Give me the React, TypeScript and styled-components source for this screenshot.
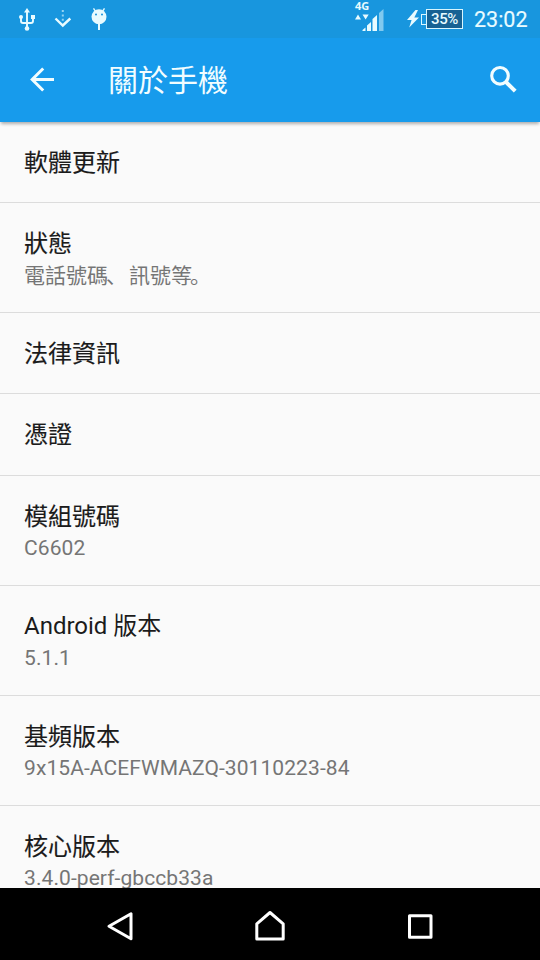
import React from 'react';
import styled, { createGlobalStyle } from 'styled-components';

const GlobalStyle = createGlobalStyle`
  html, body { margin: 0; padding: 0; background: #000; }
  * { box-sizing: border-box; }
`;

const Screen = styled.div`
  width: 540px;
  height: 960px;
  display: flex;
  flex-direction: column;
  overflow: hidden;
  background: #fafafa;
  font-family: Roboto, 'Noto Sans CJK TC', sans-serif;
`;

const StatusBar = styled.header`
  flex: none;
  height: 38px;
  display: flex;
  align-items: flex-start;
  justify-content: space-between;
  background: #1896de;
  color: #e8fbff;
`;

const StatusIcons = styled.div`
  display: flex;
`;

const StatusGroup = styled.div`
  display: flex;
  align-items: flex-start;
  padding-right: 12px;
`;

const Signal = styled.div`
  width: 34px;
  height: 34px;
  margin-right: 17px;
  display: flex;
  flex-direction: column;
`;

const NetworkLabel = styled.span`
  height: 11px;
  font: 700 11px/11px 'Noto Sans', sans-serif;
`;

const Battery = styled.div`
  display: flex;
  align-items: center;
  margin: 9px 11px 0 0;
`;

const BatteryTip = styled.div`
  width: 5px;
  height: 11px;
  border: 1.5px solid #d8f6ff;
  border-right: 0;
`;

const BatteryBody = styled.div`
  width: 37px;
  height: 20px;
  border: 1px solid #d8f6ff;
  background: #176293;
  text-align: center;
  font: 500 15px/18px Roboto, sans-serif;
  letter-spacing: -0.4px;
`;

const Clock = styled.span`
  margin-top: 8px;
  width: 54px;
  font-size: 21.5px;
  line-height: 24px;
  white-space: nowrap;
  -webkit-text-stroke: 0.15px currentColor;
`;

const AppBar = styled.nav`
  flex: none;
  height: 84px;
  display: flex;
  align-items: center;
  padding: 0 20px 0 24px;
  background: #179bec;
  color: #f2fdff;
  box-shadow: 0 3px 3px -1px rgba(0, 0, 0, 0.3);
  z-index: 1;
`;

const IconButton = styled.button`
  display: flex;
  padding: 0;
  border: 0;
  background: none;
  color: inherit;
`;

const PageTitle = styled.h1`
  flex: 1;
  margin: 2px 0 0 48px;
  font-size: 30px;
  line-height: 40px;
  font-weight: 400;
`;

const SettingsList = styled.main`
  flex: 1;
  min-height: 0;
  overflow: hidden;
`;

const SettingRow = styled.section<{ $height: number }>`
  height: ${(p) => p.$height}px;
  padding: 22px 24px 0;
  border-bottom: 1px solid #dcdcdc;
  white-space: nowrap;
`;

const RowTitle = styled.h2<{ $mixed?: boolean }>`
  height: 36px;
  margin: 0;
  padding-top: ${(p) => (p.$mixed ? 0 : 1)}px;
  color: #1b1b1b;
  font-size: 24px;
  line-height: 36px;
  font-weight: 400;
  -webkit-text-stroke: ${(p) => (p.$mixed ? 0 : 0.15)}px currentColor;
`;

const RowSummary = styled.p<{ $cjk?: boolean }>`
  margin: ${(p) => (p.$cjk ? '-1px' : '0')} 0 0;
  color: #757575;
  font-size: 21px;
  letter-spacing: ${(p) => (p.$cjk ? 0 : 0.08)}px;
  line-height: 28px;
`;

const Punctuation = styled.span`
  margin: 0 2px 0 -2px;
  font-family: 'Noto Sans CJK SC', sans-serif;
`;

const NavigationBar = styled.footer`
  flex: none;
  height: 72px;
  display: flex;
  justify-content: center;
  align-items: center;
  gap: 110px;
  padding-top: 4px;
  background: #000;
  color: #fff;
`;

interface Setting {
  title: string;
  height: number;
  cjk?: boolean;
  mixed?: boolean;
  summary?: React.ReactNode;
}

const settings: Setting[] = [
  { title: '軟體更新', height: 81 },
  {
    title: '狀態',
    height: 110,
    cjk: true,
    summary: (
      <>
        電話號碼<Punctuation lang="zh-CN">、</Punctuation>訊號等<Punctuation lang="zh-CN">。</Punctuation>
      </>
    ),
  },
  { title: '法律資訊', height: 81 },
  { title: '憑證', height: 82 },
  { title: '模組號碼', height: 110, summary: 'C6602' },
  { title: 'Android 版本', height: 110, mixed: true, summary: '5.1.1' },
  { title: '基頻版本', height: 110, summary: '9x15A-ACEFWMAZQ-30110223-84' },
  { title: '核心版本', height: 110, summary: '3.4.0-perf-gbccb33a' },
];

const NotificationIcons = () => (
  <svg width="120" height="38" viewBox="0 0 120 38" fill="none" stroke="currentColor">
    <g strokeWidth="1.9">
      <path d="M27 11V29M21 18v3q0 2 2 2h8q2 0 2-2v-3" />
      <path d="M27 8l3 4.5h-6z" fill="currentColor" stroke="none" />
      <circle cx="27" cy="28.5" r="2.3" fill="currentColor" stroke="none" />
      <circle cx="21" cy="17" r="2" fill="currentColor" stroke="none" />
      <path d="M31 15h4v4h-4z" fill="currentColor" stroke="none" />
    </g>
    <path d="M62.8 10v11" strokeWidth="2" strokeDasharray="2 2.4" opacity=".6" />
    <path d="M55.5 18.5l7.3 7 7.5-7" strokeWidth="2.4" />
    <circle cx="99" cy="16.8" r="7.5" fill="currentColor" stroke="none" />
    <path d="M93.5 8.3l2 3M104.5 8.3l-2 3" strokeWidth="1.4" />
    <path d="M99 23v7" strokeWidth="2" />
    <circle cx="96" cy="14.5" r="1" fill="#1992da" stroke="none" />
    <circle cx="102" cy="14.5" r="1" fill="#1992da" stroke="none" />
  </svg>
);

const SignalIcon = () => (
  <svg width="34" height="23" viewBox="0 0 34 23" fill="currentColor" overflow="visible">
    <path d="M0 8.5l3-5L6 8.5zM7.5 3.5h6.2L10.6 8.5z" />
    <path d="M7.5 20v-1l3-2.5V20zM12 20v-5.5l4-3.5V20zM17.5 20V8l4.5-4v16z" />
    <path d="M24 20V2L28.5-2v22z" opacity=".5" />
  </svg>
);

const App: React.FC = () => (
  <>
    <GlobalStyle />
    <Screen lang="zh-TW">
      <StatusBar>
        <StatusIcons>
          <NotificationIcons />
        </StatusIcons>
        <StatusGroup>
          <Signal>
            <NetworkLabel>4G</NetworkLabel>
            <SignalIcon />
          </Signal>
          <svg width="15" height="38" viewBox="0 0 15 38" fill="currentColor">
            <path d="M9.5 10L1 20h4.6L3.2 27.5 13 17.4H8.3L12 10z" />
          </svg>
          <Battery>
            <BatteryTip />
            <BatteryBody>35%</BatteryBody>
          </Battery>
          <Clock>23:02</Clock>
        </StatusGroup>
      </StatusBar>
      <AppBar>
        <IconButton aria-label="返回">
          <svg width="36" height="36" viewBox="0 0 36 36" fill="none" stroke="currentColor" strokeWidth="3">
            <path d="M30 17.5H8M19.2 6.5L8.2 17.5l11 11" />
          </svg>
        </IconButton>
        <PageTitle>關於手機</PageTitle>
        <IconButton aria-label="搜尋">
          <svg width="32" height="32" viewBox="0 0 32 32" fill="none" stroke="currentColor">
            <circle cx="12" cy="11.8" r="8.3" strokeWidth="3.1" />
            <path d="M18 18l9.2 9.2" strokeWidth="4" />
          </svg>
        </IconButton>
      </AppBar>
      <SettingsList>
        {settings.map((item) => (
          <SettingRow key={item.title} $height={item.height}>
            <RowTitle $mixed={item.mixed}>{item.title}</RowTitle>
            {item.summary && <RowSummary $cjk={item.cjk}>{item.summary}</RowSummary>}
          </SettingRow>
        ))}
      </SettingsList>
      <NavigationBar>
        <IconButton aria-label="上一頁">
          <svg width="40" height="40" viewBox="0 0 40 40" fill="none" stroke="currentColor" strokeWidth="3" strokeLinejoin="round">
            <path d="M31 7.8v25L9 20.3z" />
          </svg>
        </IconButton>
        <IconButton aria-label="主畫面">
          <svg width="40" height="40" viewBox="0 0 40 40" fill="none" stroke="currentColor" strokeWidth="3" strokeLinejoin="round">
            <path d="M6.8 33V17.8L20 6.5l13.2 11.3V33z" />
          </svg>
        </IconButton>
        <IconButton aria-label="最近使用">
          <svg width="40" height="40" viewBox="0 0 40 40" fill="none" stroke="currentColor" strokeWidth="3" strokeLinejoin="round">
            <path d="M9.5 9.7h21.5v21.5h-21.5z" />
          </svg>
        </IconButton>
      </NavigationBar>
    </Screen>
  </>
);

export default App;
